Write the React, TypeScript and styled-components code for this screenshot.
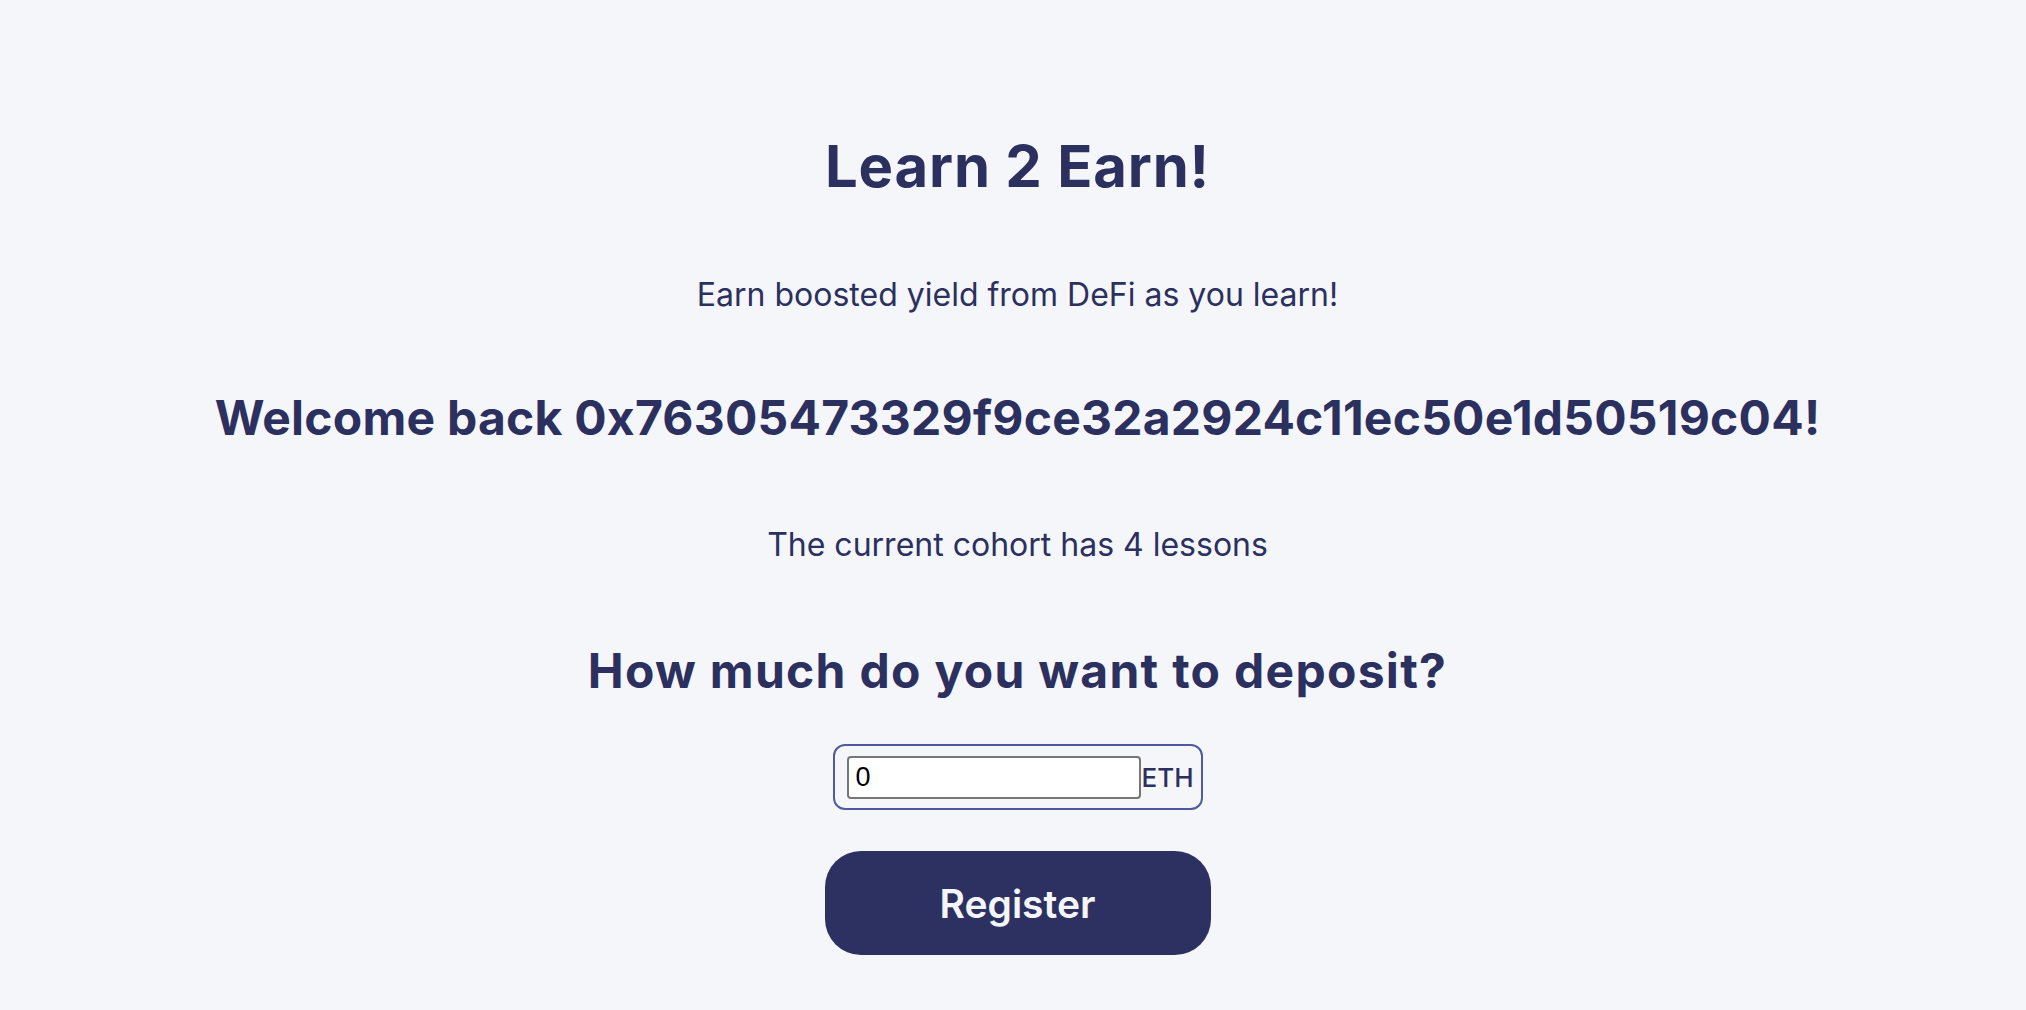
import React from "react";
import styled, { createGlobalStyle } from "styled-components";

const Global = createGlobalStyle`
  html, body { margin: 0; padding: 0; background: #f5f6fa; }
  body { font-family: Inter, "Noto Sans", sans-serif; color: #2b305f; }
`;

const Page = styled.main`
  min-height: 1010px;
  display: flex;
  flex-direction: column;
  align-items: center;
  padding: 137px 0 0 9px;
  box-sizing: border-box;
`;

const Title = styled.h1<{ size: number; gap: number; tracking: number }>`
  margin: 0 0 ${(p) => p.gap}px;
  font-family: Inter, sans-serif;
  font-weight: 700;
  font-size: ${(p) => p.size}px;
  letter-spacing: ${(p) => p.tracking}em;
  line-height: 1;
  color: #2b305f;
  text-align: center;
`;

const Text = styled.p<{ gap: number }>`
  margin: 0 0 ${(p) => p.gap}px;
  font-family: Inter, sans-serif;
  font-weight: 400;
  font-size: 32px;
  line-height: 1;
  color: #2b305f;
  text-align: center;
`;

const AmountBox = styled.div`
  display: flex;
  align-items: center;
  width: 370px;
  height: 66px;
  box-sizing: border-box;
  padding: 0 12px;
  border: 2px solid #4f5b9c;
  border-radius: 12px;
  margin-bottom: 41px;
`;

const AmountInput = styled.input`
  width: 294px;
  height: 43px;
  box-sizing: border-box;
  border: 2px solid #767676;
  border-radius: 4px;
  background: #fff;
  padding: 0 7px;
  font-family: "Liberation Sans", Arial, sans-serif;
  font-size: 27px;
  color: #000;
  outline: none;
`;

const Unit = styled.span`
  font-family: Inter, sans-serif;
  font-weight: 500;
  font-size: 26px;
  color: #2b305f;
  margin-left: 1px;
`;

const RegisterButton = styled.button`
  width: 386px;
  height: 104px;
  border: none;
  border-radius: 36px;
  background: #2c3161;
  color: #f5f6fa;
  font-family: Inter, sans-serif;
  font-weight: 600;
  font-size: 39px;
  cursor: pointer;
`;

export default function App() {
  return (
    <>
      <Global />
      <Page>
        <Title size={58} gap={84} tracking={0.014}>Learn 2 Earn!</Title>
        <Text gap={83}>Earn boosted yield from DeFi as you learn!</Text>
        <Title size={48} gap={87} tracking={0.005}>Welcome back 0x76305473329f9ce32a2924c11ec50e1d50519c04!</Title>
        <Text gap={86}>The current cohort has 4 lessons</Text>
        <Title size={48} gap={49} tracking={0.027}>How much do you want to deposit?</Title>
        <AmountBox>
          <AmountInput type="text" defaultValue="0" />
          <Unit>ETH</Unit>
        </AmountBox>
        <RegisterButton>Register</RegisterButton>
      </Page>
    </>
  );
}
